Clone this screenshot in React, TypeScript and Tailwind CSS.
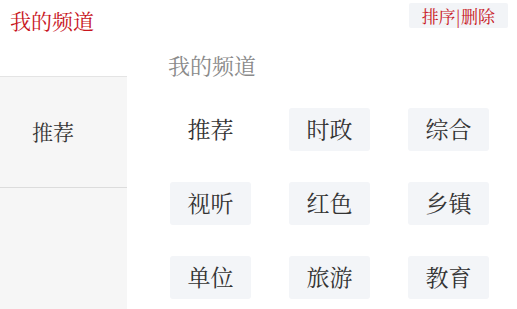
import React from 'react';

const channels = ['推荐', '时政', '综合', '视听', '红色', '乡镇', '单位', '旅游', '教育'];

const font = { fontFamily: '"Noto Serif CJK SC", "Liberation Serif", "Noto Sans CJK SC", serif' };

export default function App() {
  return (
    <div className="w-[517px] h-[309px] bg-white overflow-hidden" style={font}>
      {/* Header */}
      <div className="h-[40px] flex items-start justify-between pl-[10px] pr-[9px]">
        <div className="text-[21px] leading-[40px] text-[#c8151d]">我的频道</div>
        <button className="mt-[3px] h-[25px] px-[13px] bg-[#f2f4f7] rounded-[2px] text-[17px] leading-[25px] text-[#c8151d]">
          排序|删除
        </button>
      </div>

      <div className="flex h-[269px]">
        {/* Sidebar */}
        <div className="w-[127px] flex flex-col">
          <div className="h-[36px] bg-white" />
          <div className="flex-1 bg-[#f6f6f6] border-t border-[#e4e4e4]">
            <div className="h-[111px] border-b border-[#dcdcdc] flex items-center pl-[32px] text-[21px] text-[#333]">
              推荐
            </div>
          </div>
        </div>

        {/* Channels */}
        <div className="flex-1 pl-[41px]">
          <div className="h-[50px] pt-[12px] text-[22px] leading-[26px] text-[#8a8a8a]">我的频道</div>
          <div className="mt-[18px] grid grid-cols-[81px_81px_81px] gap-x-[38px] gap-y-[31px] pl-[2px]">
            {channels.map((c, i) => (
              <div
                key={c}
                className={`h-[43px] rounded-[3px] flex items-center justify-center text-[23px] text-[#333] ${
                  i === 0 ? '' : 'bg-[#f3f5f8]'
                }`}
              >
                {c}
              </div>
            ))}
          </div>
        </div>
      </div>
    </div>
  );
}
